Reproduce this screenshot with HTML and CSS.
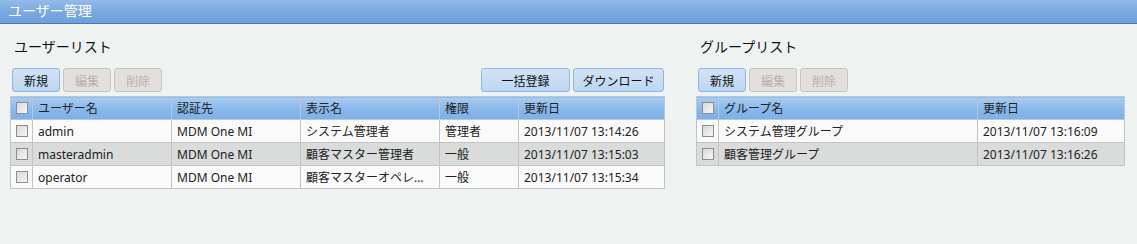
FILE: index.html
```html
<!DOCTYPE html>
<html lang="ja">
<head>
    <meta charset="UTF-8">
    <title>ユーザー管理</title>
    <link rel="stylesheet" href="styles.css">
</head>
<body>
<div class="titlebar">ユーザー管理</div>
<div class="content">
    <div class="panel user-panel">
        <h2 class="panel-title">ユーザーリスト</h2>
        <div class="toolbar">
            <div class="btn-group">
                <button class="btn">新規</button>
                <button class="btn" disabled>編集</button>
                <button class="btn" disabled>削除</button>
            </div>
            <div class="btn-group">
                <button class="btn wide">一括登録</button>
                <button class="btn wider">ダウンロード</button>
            </div>
        </div>
        <table class="grid">
            <colgroup>
                <col class="c-check">
                <col style="width:139px">
                <col style="width:129px">
                <col style="width:139px">
                <col style="width:79px">
                <col>
            </colgroup>
            <thead>
            <tr>
                <th><span class="check"></span></th>
                <th>ユーザー名</th>
                <th>認証先</th>
                <th>表示名</th>
                <th>権限</th>
                <th>更新日</th>
            </tr>
            </thead>
            <tbody>
            <tr>
                <td><span class="check"></span></td>
                <td>admin</td>
                <td>MDM One MI</td>
                <td>システム管理者</td>
                <td>管理者</td>
                <td>2013/11/07 13:14:26</td>
            </tr>
            <tr class="alt">
                <td><span class="check"></span></td>
                <td>masteradmin</td>
                <td>MDM One MI</td>
                <td>顧客マスター管理者</td>
                <td>一般</td>
                <td>2013/11/07 13:15:03</td>
            </tr>
            <tr>
                <td><span class="check"></span></td>
                <td>operator</td>
                <td>MDM One MI</td>
                <td>顧客マスターオペレ…</td>
                <td>一般</td>
                <td>2013/11/07 13:15:34</td>
            </tr>
            </tbody>
        </table>
    </div>
    <div class="panel group-panel">
        <h2 class="panel-title">グループリスト</h2>
        <div class="toolbar">
            <div class="btn-group">
                <button class="btn">新規</button>
                <button class="btn" disabled>編集</button>
                <button class="btn" disabled>削除</button>
            </div>
        </div>
        <table class="grid">
            <colgroup>
                <col class="c-check">
                <col style="width:259px">
                <col>
            </colgroup>
            <thead>
            <tr>
                <th><span class="check"></span></th>
                <th>グループ名</th>
                <th>更新日</th>
            </tr>
            </thead>
            <tbody>
            <tr>
                <td><span class="check"></span></td>
                <td>システム管理グループ</td>
                <td>2013/11/07 13:16:09</td>
            </tr>
            <tr class="alt">
                <td><span class="check"></span></td>
                <td>顧客管理グループ</td>
                <td>2013/11/07 13:16:26</td>
            </tr>
            </tbody>
        </table>
    </div>
</div>
</body>
</html>
```

FILE: styles.css
```css
body{
    margin:0;
    background:#eef3f1;
    font-family:"Noto Sans","Noto Sans CJK JP",sans-serif;
    font-size:12px;
    color:#222;
}
.titlebar{
    height:23px;
    line-height:22px;
    padding-left:8px;
    font-size:14px;
    color:#fff;
    background:linear-gradient(#93bbea,#7aa9e2 50%,#6c9fdf);
    border-bottom:1px solid #4e78a8;
}
.content{
    display:flex;
    gap:31px;
    padding:0 12px 0 10px;
}
.user-panel{width:655px;}
.group-panel{width:429px;}
.panel-title{
    margin:13px 0 0 4px;
    height:20px;
    line-height:20px;
    font-size:14px;
    font-weight:normal;
    color:#111;
}
.toolbar{
    display:flex;
    justify-content:space-between;
    margin-top:11px;
    padding:0 1px 0 2px;
}
.btn-group{
    display:flex;
    gap:3px;
}
.btn{
    width:48px;
    height:24px;
    padding:0;
    font:12px "Noto Sans CJK JP",sans-serif;
    color:#111;
    background:linear-gradient(#d2e4f6,#bcd6f1);
    border:1px solid #8eb7e3;
    border-radius:3px;
}
.btn.wide{width:89px;}
.btn.wider{width:91px;}
.btn:disabled{
    color:#b8b0b0;
    background:#e3dfdd;
    border-color:#c9c4c2;
}
.grid{
    width:100%;
    margin-top:4px;
    border-collapse:collapse;
    table-layout:fixed;
    border:1px solid #c3c3c3;
}
.grid col.c-check{width:22px;}
.grid th, .grid td{
    height:22px;
    padding:0 0 0 5px;
    border:1px solid #c3c3c3;
    text-align:left;
    font-weight:normal;
    white-space:nowrap;
    overflow:hidden;
}
.grid th{
    background:linear-gradient(#a8ccf1,#86b6ea 60%,#7db0e8);
    border-color:#b8c8d8;
}
.grid tbody tr{background:#f9faf9;}
.grid tbody tr.alt{background:#d9dcda;}
.check{
    display:block;
    width:10px;
    height:10px;
    border:1px solid #8d8d8d;
    background:linear-gradient(135deg,#d8d8d8,#f6f6f6);
}
```
